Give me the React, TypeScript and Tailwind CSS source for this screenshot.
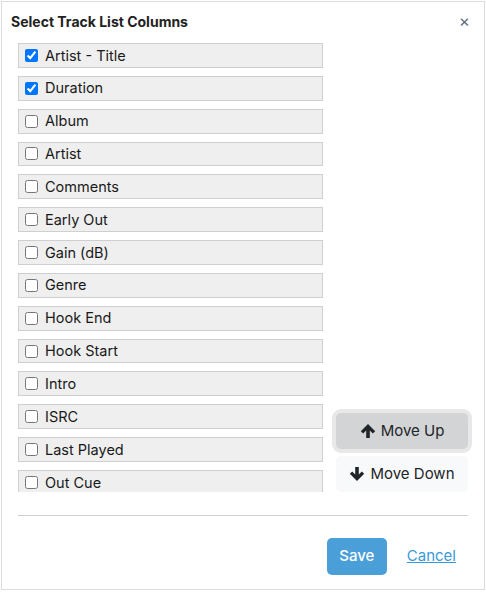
const columns = [
  { label: 'Artist - Title', checked: true },
  { label: 'Duration', checked: true },
  { label: 'Album', checked: false },
  { label: 'Artist', checked: false },
  { label: 'Comments', checked: false },
  { label: 'Early Out', checked: false },
  { label: 'Gain (dB)', checked: false },
  { label: 'Genre', checked: false },
  { label: 'Hook End', checked: false },
  { label: 'Hook Start', checked: false },
  { label: 'Intro', checked: false },
  { label: 'ISRC', checked: false },
  { label: 'Last Played', checked: false },
  { label: 'Out Cue', checked: false },
]

function ArrowUp() {
  return (
    <svg viewBox="0 0 16 16" className="h-[16px] w-[16px]" fill="currentColor">
      <path d="M8 1 L15.2 8.2 L12.8 10.6 L9.8 7.6 V15 H6.2 V7.6 L3.2 10.6 L0.8 8.2 Z" />
    </svg>
  )
}

function ArrowDown() {
  return (
    <svg viewBox="0 0 16 16" className="h-[16px] w-[16px]" fill="currentColor">
      <path d="M8 15 L15.2 7.8 L12.8 5.4 L9.8 8.4 V1 H6.2 V8.4 L3.2 5.4 L0.8 7.8 Z" />
    </svg>
  )
}

export default function App() {
  return (
    <div className="h-[592px] w-[486px] bg-white pl-px pt-px" style={{ fontFamily: 'Inter, "Noto Sans", sans-serif' }}>
      <div className="relative flex h-[589px] w-[484px] flex-col border border-[#dcdcdc] bg-white text-[#212529]">
        {/* header */}
        <div className="flex items-start justify-between pl-[9px] pr-[14px] pt-[10px]">
          <h2 className="text-[14px] font-bold leading-5 text-[#222]">Select Track List Columns</h2>
          <button className="mt-[-1px] text-[17px] leading-5 text-[#5f6f82]">×</button>
        </div>

        {/* body */}
        <div className="mt-[11px] flex px-[16px]">
          <div className="flex h-[449px] w-[305px] flex-col gap-2 overflow-hidden">
            {columns.map((c) => (
              <label
                key={c.label}
                className="flex h-[24.85px] shrink-0 items-center gap-[7px] border border-[#cfcfcf] bg-[#efefef] pl-[6px] text-[14.5px] text-[#1a1a1a]"
              >
                <input type="checkbox" defaultChecked={c.checked} className="m-0 h-[13px] w-[13px]" />
                <span>{c.label}</span>
              </label>
            ))}
          </div>
          <div className="ml-[13px] flex flex-1 flex-col justify-end">
            <button className="flex h-[36px] items-center justify-center gap-[5px] rounded-[5px] bg-[#d3d4d5] text-[15px] text-[#212529] shadow-[0_0_0_4px_#e8e8e9]">
              <ArrowUp />
              Move Up
            </button>
            <button className="mt-[7px] flex h-[36px] items-center justify-center gap-[5px] rounded-[5px] bg-[#f8f9fa] text-[15px] text-[#212529]">
              <ArrowDown />
              Move Down
            </button>
          </div>
        </div>

        {/* divider */}
        <div className="mx-[16px] mt-[23px] border-t border-[#cfcfcf]" />

        {/* footer */}
        <div className="mt-[22px] flex items-center justify-end gap-[20px] pr-[28px]">
          <button className="h-[37px] w-[60px] rounded-[5px] bg-[#4a9fd9] text-[15px] font-medium text-white">Save</button>
          <a className="text-[15px] text-[#3a9ad9] underline">Cancel</a>
        </div>
      </div>
    </div>
  )
}
